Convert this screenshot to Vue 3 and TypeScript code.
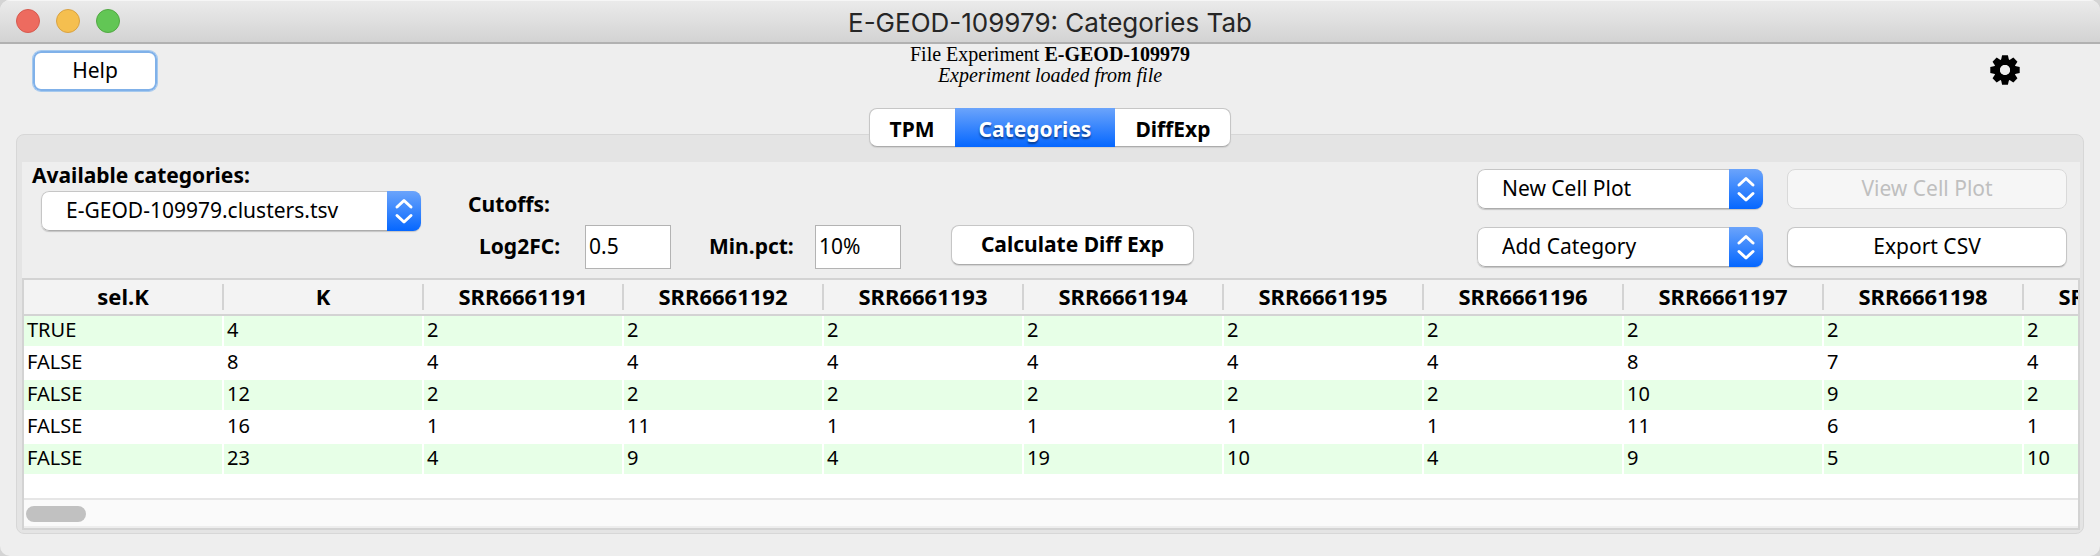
<script setup lang="ts">
import { ref } from 'vue'

interface Row {
  selected: string
  k: number
  clusters: number[]
}

const tabs = ['TPM', 'Categories', 'DiffExp']
const activeTab = ref('Categories')

const category = ref('E-GEOD-109979.clusters.tsv')
const plotAction = ref('New Cell Plot')
const categoryAction = ref('Add Category')
const log2fc = ref('0.5')
const minPct = ref('10%')

const runs = Array.from({ length: 9 }, (_, i) => `SRR666119${i + 1}`)
const columns = ['sel.K', 'K', ...runs]

const rows: Row[] = [
  { selected: 'TRUE', k: 4, clusters: [2, 2, 2, 2, 2, 2, 2, 2, 2] },
  { selected: 'FALSE', k: 8, clusters: [4, 4, 4, 4, 4, 4, 8, 7, 4] },
  { selected: 'FALSE', k: 12, clusters: [2, 2, 2, 2, 2, 2, 10, 9, 2] },
  { selected: 'FALSE', k: 16, clusters: [1, 11, 1, 1, 1, 1, 11, 6, 1] },
  { selected: 'FALSE', k: 23, clusters: [4, 9, 4, 19, 10, 4, 9, 5, 10] },
]
</script>

<template>
  <div class="window">
    <header class="titlebar">
      <div class="lights">
        <button class="light close" type="button" aria-label="Close"></button>
        <button class="light minimise" type="button" aria-label="Minimise"></button>
        <button class="light maximise" type="button" aria-label="Maximise"></button>
      </div>
      <h1>E-GEOD-109979: Categories Tab</h1>
    </header>

    <div class="info">
      <button class="btn help" type="button">Help</button>
      <p class="experiment">
        File Experiment <b>E-GEOD-109979</b><br />
        <i>Experiment loaded from file</i>
      </p>
      <button class="gear" type="button" aria-label="Settings">
        <svg viewBox="-15 -15 30 30" width="30" height="30">
          <g>
            <path
              v-for="n in 8"
              :key="n"
              d="M-4.2 -9 L-2.9 -14.7 H2.9 L4.2 -9 Z"
              :transform="`rotate(${n * 45})`"
            />
          </g>
          <circle r="8" fill="none" stroke="#000" stroke-width="6" />
          <circle r="5" class="hole" />
        </svg>
      </button>
    </div>

    <nav class="tabs" role="tablist">
      <button
        v-for="tab in tabs"
        :key="tab"
        type="button"
        role="tab"
        :aria-selected="tab === activeTab"
        :class="{ active: tab === activeTab }"
        @click="activeTab = tab"
      >
        {{ tab }}
      </button>
    </nav>

    <main class="panel">
      <div class="toolbar">
        <div class="available">
          <label for="category">Available categories:</label>
          <div class="combo combo-wide">
            <select id="category" v-model="category">
              <option>E-GEOD-109979.clusters.tsv</option>
            </select>
            <span class="arrows">
              <svg viewBox="0 0 34 40" width="34" height="40"><path d="M10 16 L17 9.5 L24 16 M10 24.5 L17 31 L24 24.5" /></svg>
            </span>
          </div>
        </div>

        <fieldset class="cutoffs">
          <legend>Cutoffs:</legend>
          <div class="fields">
            <label for="log2fc">Log2FC:</label>
            <input id="log2fc" v-model="log2fc" type="text" />
            <label for="minpct">Min.pct:</label>
            <input id="minpct" v-model="minPct" type="text" />
          </div>
        </fieldset>

        <button class="btn calculate" type="button">Calculate Diff Exp</button>

        <div class="actions">
          <div class="combo">
            <select v-model="plotAction" aria-label="Cell plot">
              <option>New Cell Plot</option>
            </select>
            <span class="arrows">
              <svg viewBox="0 0 34 40" width="34" height="40"><path d="M10 16 L17 9.5 L24 16 M10 24.5 L17 31 L24 24.5" /></svg>
            </span>
          </div>
          <button class="btn" type="button" disabled>View Cell Plot</button>
          <div class="combo">
            <select v-model="categoryAction" aria-label="Category">
              <option>Add Category</option>
            </select>
            <span class="arrows">
              <svg viewBox="0 0 34 40" width="34" height="40"><path d="M10 16 L17 9.5 L24 16 M10 24.5 L17 31 L24 24.5" /></svg>
            </span>
          </div>
          <button class="btn" type="button">Export CSV</button>
        </div>
      </div>

      <div class="grid">
        <div class="viewport">
          <table>
            <thead>
              <tr>
                <th v-for="column in columns" :key="column" scope="col">{{ column }}</th>
              </tr>
            </thead>
            <tbody>
              <tr v-for="row in rows" :key="row.k">
                <td>{{ row.selected }}</td>
                <td>{{ row.k }}</td>
                <td v-for="(cluster, i) in row.clusters" :key="i">{{ cluster }}</td>
              </tr>
            </tbody>
          </table>
        </div>
        <div class="scrollbar"><div class="thumb"></div></div>
      </div>
    </main>
  </div>
</template>

<style>
body {
  margin: 0;
  background: #d4d4d4;
}
</style>

<style scoped>
* {
  box-sizing: border-box;
}

.window {
  display: flex;
  flex-direction: column;
  min-height: 100vh;
  overflow: hidden;
  border-radius: 10px;
  background: #eee;
  color: #000;
  font-family: 'Noto Sans', 'Open Sans', sans-serif;
  font-size: 21px;
  line-height: 28px;
}

button,
input,
select {
  margin: 0;
  font: inherit;
  color: inherit;
}

.titlebar {
  display: grid;
  grid-template-columns: 1fr auto 1fr;
  align-items: center;
  height: 44px;
  padding: 0 16px;
  border-bottom: 2px solid #b1b1b1;
  background: linear-gradient(#ebebeb, #d3d3d3);
  box-shadow: inset 0 1px #f6f6f6;
}

.titlebar h1 {
  margin: 0;
  padding-top: 4px;
  font: 400 26px/32px Inter, Roboto, sans-serif;
  color: #262626;
}

.lights {
  display: flex;
  gap: 16px;
}

.light {
  width: 24px;
  height: 24px;
  padding: 0;
  border: 1px solid;
  border-radius: 50%;
}

.close {
  background: #ed6b5f;
  border-color: #d65a4f;
}

.minimise {
  background: #f5bf4f;
  border-color: #d8a243;
}

.maximise {
  background: #62c655;
  border-color: #52a843;
}

.info {
  display: grid;
  grid-template-columns: 1fr auto 1fr;
  align-items: start;
  height: 64px;
  padding: 0 33px;
}

.btn {
  height: 40px;
  padding: 0 0 2px;
  border: 1px solid #c6c6c6;
  border-bottom-color: #acacac;
  border-radius: 8px;
  background: #fff;
  box-shadow: 0 1px 1px #d2d2d2;
}

.btn:disabled {
  border-color: #d9d9d9;
  background: #f6f6f6;
  box-shadow: none;
  color: #bfbfbf;
}

.help {
  width: 124px;
  height: 40px;
  margin-top: 7px;
  border: 0;
  box-shadow: 0 0 0 1px #a5c9ee, inset 0 0 0 2px #80b1e9;
}

.experiment {
  margin: 0;
  font: 20px/21px 'Liberation Serif', serif;
  text-align: center;
}

.gear {
  justify-self: end;
  width: 30px;
  height: 30px;
  margin: 11px 47px 0 0;
  padding: 0;
  border: 0;
  background: none;
}

.gear svg {
  display: block;
}

.hole {
  fill: #eee;
}

.tabs {
  z-index: 1;
  display: flex;
  align-self: center;
  height: 39px;
  border: 1px solid #c6c6c6;
  border-bottom-color: #acacac;
  border-radius: 8px;
  background: #fff;
  box-shadow: 0 1px 1px #d0d0d0;
}

.tabs button {
  padding: 2px 20px 0;
  border: 0;
  background: none;
  font-weight: 700;
}

.tabs .active {
  margin: -1px 0;
  padding: 2px 24px 0;
  background: linear-gradient(#6ba4fb, #0567ff);
  color: #fff;
  text-shadow: 0 2px 2px #0a3c8c;
}

.panel {
  display: flex;
  flex: 1;
  flex-direction: column;
  margin: -13px 16px 22px;
  padding: 27px 3px 3px 5px;
  border: 1px solid #d7d7d7;
  border-radius: 8px;
  background: #e4e4e4;
}

.toolbar {
  display: flex;
  align-items: flex-start;
  height: 116px;
  padding: 0 13px 0 10px;
  background: #eee;
}

.available {
  display: grid;
  gap: 3px;
  font-weight: 700;
  line-height: 26px;
}

.combo {
  display: grid;
  grid-template-columns: 1fr 34px;
  height: 40px;
  overflow: hidden;
  border-radius: 8px;
  box-shadow: 0 1px 1px #c4c4c4;
  font-weight: 400;
}

.combo-wide {
  width: 380px;
  margin-left: 9px;
}

.combo select {
  grid-area: 1 / 1 / 2 / 3;
  padding: 0 34px 2px 24px;
  border: 1px solid #c6c6c6;
  border-bottom-color: #acacac;
  border-radius: 8px;
  appearance: none;
  background: #fff;
}

.arrows {
  grid-area: 1 / 2;
  background: linear-gradient(#6ba4fb, #0567ff);
  pointer-events: none;
}

.arrows svg {
  display: block;
  fill: none;
  stroke: #fff;
  stroke-width: 3;
  stroke-linecap: round;
  stroke-linejoin: round;
}

.cutoffs {
  min-width: 0;
  margin: 28px 0 0 47px;
  padding: 0 0 0 11px;
  border: 0;
  font-weight: 700;
}

.cutoffs legend {
  margin-left: -11px;
  padding: 0 0 7px;
}

.fields {
  display: flex;
  align-items: center;
}

.fields label {
  width: 106px;
  padding-bottom: 2px;
}

.fields input {
  width: 86px;
  height: 44px;
  padding: 0 3px 2px;
  border: 1px solid #b3b3b3;
  background: #fff;
  font-weight: 400;
}

.fields input + label {
  margin-left: 38px;
}

.calculate {
  width: 243px;
  margin: 63px 0 0 50px;
  font-weight: 700;
}

.actions {
  display: grid;
  grid-template-columns: 286px 280px;
  gap: 18px 24px;
  margin: 7px 0 0 auto;
}

.grid {
  display: flex;
  flex: 1;
  flex-direction: column;
  border: 2px solid #d3d3d3;
  background: #fff;
}

.viewport {
  flex: 1 0 0;
  min-height: 196px;
  overflow: hidden;
}

table {
  width: 2200px;
  table-layout: fixed;
  border-spacing: 0;
}

th {
  height: 36px;
  padding: 0 2px 2px 0;
  border-bottom: 2px solid #d3d3d3;
  background: #f3f3f3 linear-gradient(#d3d3d3, #d3d3d3) right 4px / 2px 26px no-repeat;
  font-size: 22px;
}

td {
  height: 32px;
  padding: 0 3px 2px;
  border: solid #fff;
  border-width: 0 2px 2px 0;
  font-size: 20px;
}

tbody tr:nth-child(odd) td {
  background: #e7ffe7;
}

.scrollbar {
  height: 30px;
  padding: 6px 2px;
  border-top: 2px solid #e6e6e6;
  border-bottom: 2px solid #ededed;
  background: #fafafa;
}

.thumb {
  width: 60px;
  height: 16px;
  border-radius: 8px;
  background: #c1c1c1;
}
</style>
